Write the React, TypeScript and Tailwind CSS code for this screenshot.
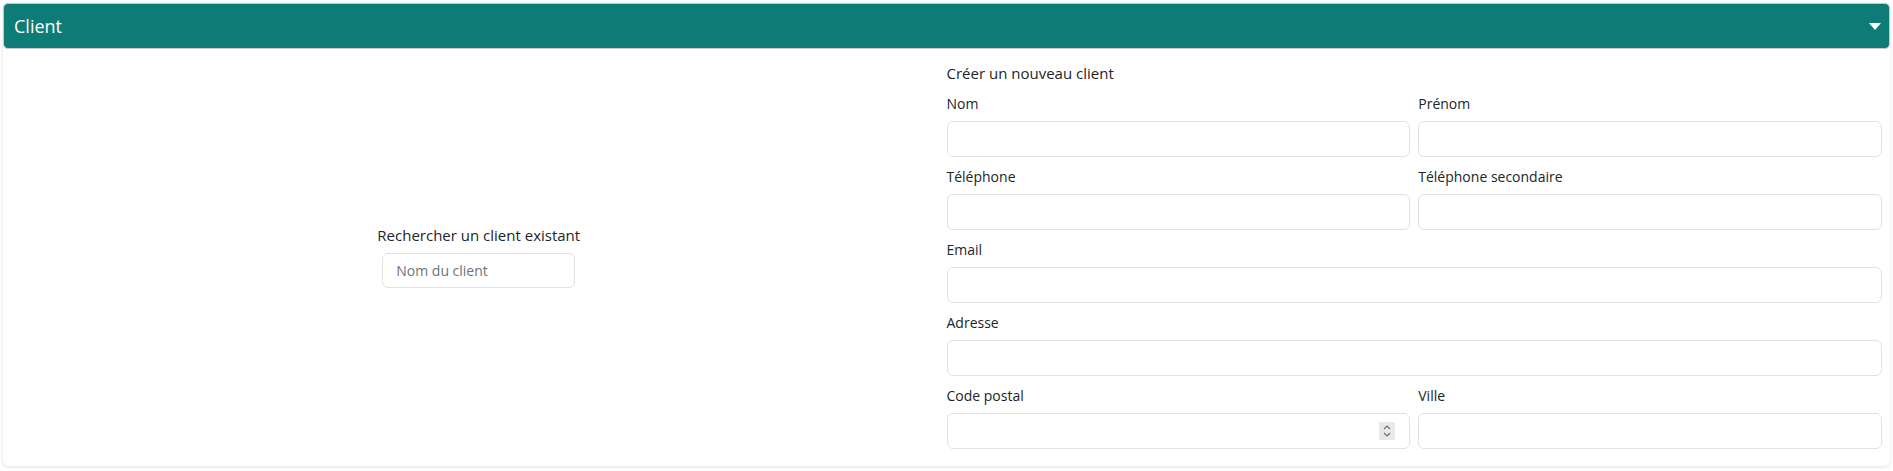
function Field({ label, spinner }: { label: string; spinner?: boolean }) {
  return (
    <div className="flex flex-col">
      <label className="mb-[7px] text-sm leading-5">{label}</label>
      <div className="relative">
        <input
          type="text"
          className="h-9 w-full rounded-md border border-[#dee2e6] bg-white px-3 text-sm outline-none"
        />
        {spinner && (
          <span className="absolute right-[15px] top-1/2 flex h-[18px] w-4 -translate-y-1/2 flex-col items-center justify-center bg-[#e9e9ed]">
            <svg width="8" height="14" viewBox="0 0 8 14" fill="none" stroke="#6b6b6b" strokeWidth="1.1">
              <path d="M1 5 L4 2 L7 5" />
              <path d="M1 9 L4 12 L7 9" />
            </svg>
          </span>
        )}
      </div>
    </div>
  );
}

export default function App() {
  return (
    <div className="bg-white p-[3px] font-['Open_Sans',sans-serif] text-[#212529]">
      <div className="rounded-md bg-white shadow-[0_1px_4px_rgba(0,0,0,0.12)]">
        <div className="flex h-[46px] items-center justify-between rounded-[5px] border border-[#c9c9c9] bg-[#0e7c76] pl-[10px] pr-[8px] text-[18px] text-white">
          <span>Client</span>
          <svg width="12" height="7" viewBox="0 0 12 7">
            <path d="M0 0 H12 L6 7 Z" fill="white" />
          </svg>
        </div>

        <div className="grid grid-cols-2 px-2 pb-[17px] pt-3">
          <div className="flex flex-col items-center justify-center">
            <div className="mb-[6px] text-[15px] leading-6">Rechercher un client existant</div>
            <input
              type="text"
              placeholder="Nom du client"
              className="h-[35px] w-[193px] rounded-md border border-[#dee2e6] bg-white px-[13px] text-sm outline-none placeholder:text-[#6c757d]"
            />
          </div>

          <div className="flex flex-col">
            <div className="mb-[9px] text-[15px] leading-6">Créer un nouveau client</div>
            <div className="grid grid-cols-2 gap-x-2 gap-y-[10px]">
              <Field label="Nom" />
              <Field label="Prénom" />
              <Field label="Téléphone" />
              <Field label="Téléphone secondaire" />
              <div className="col-span-2">
                <Field label="Email" />
              </div>
              <div className="col-span-2">
                <Field label="Adresse" />
              </div>
              <Field label="Code postal" spinner />
              <Field label="Ville" />
            </div>
          </div>
        </div>
      </div>
    </div>
  );
}
